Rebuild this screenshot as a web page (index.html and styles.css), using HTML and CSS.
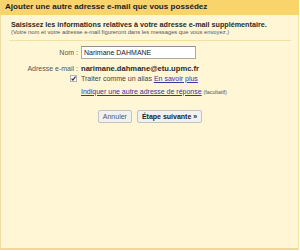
FILE: index.html
```html
<!DOCTYPE html>
<html>
<head>
  <title>Ajouter une adresse</title>
  <link rel="stylesheet" href="styles.css">
</head>
<body>
  <div class="dialog">
    <div class="title">Ajouter une autre adresse e-mail que vous possédez</div>
    <div class="content">
      <div class="intro">
        <div class="lead">Saisissez les informations relatives à votre adresse e-mail supplémentaire.</div>
        <div class="hint">(Votre nom et votre adresse e-mail figureront dans les messages que vous envoyez.)</div>
      </div>

      <div class="form">
        <div class="row name-row">
          <label class="label" for="name">Nom :</label>
          <input class="field" type="text" id="name" value="Narimane DAHMANE">
        </div>
        <div class="row email-row">
          <span class="label">Adresse e-mail :</span>
          <span class="email">narimane.dahmane@etu.upmc.fr</span>
        </div>
        <div class="row">
          <span class="label">
            <svg class="check" width="7" height="7" viewBox="0 0 7 7">
              <rect x="0.5" y="0.5" width="6" height="6" fill="#fdfdfd" stroke="#b5b5b5"/>
              <path d="M1.6 3.6 L2.9 5 L5.5 1.6" fill="none" stroke="#333" stroke-width="1.2"/>
            </svg>
          </span>
          <span>Traiter comme un alias <a href="#">En savoir plus</a></span>
        </div>
        <div class="row reply-row">
          <span class="label"></span>
          <span><a href="#">Indiquer une autre adresse de réponse</a> <span class="optional">(facultatif)</span></span>
        </div>
      </div>

      <div class="actions">
        <button class="btn">Annuler</button>
        <button class="btn strong">Étape suivante »</button>
      </div>
    </div>
  </div>
</body>
</html>
```

FILE: styles.css
```css
body {
  margin: 0;
  font-family: "Liberation Sans", Arial, sans-serif;
  color: #222;
}
.dialog {
  width: 299px;
  height: 250px;
  display: flex;
  flex-direction: column;
}
.title {
  background-color: #f9d36c;
  font-size: 8.1px;
  font-weight: bold;
  padding: 0 5px;
  height: 15px;
  line-height: 14px;
  color: #1e1e1e;
}
.content {
  flex: 1;
  background-color: #fff6d6;
  border-left: 1px solid #f0dfa4;
  border-right: 1px solid #f3e4ae;
  border-bottom: 2px solid #ecd992;
  padding: 0 7px 0 8px;
}
.intro {
  padding: 5px 2px 4px;
  border-bottom: 1px solid #f3e1a0;
}
.lead {
  font-size: 7.2px;
  font-weight: bold;
  line-height: 9px;
  color: #2a2a2a;
}
.hint {
  font-size: 5.8px;
  line-height: 7px;
  color: #555;
}
.form {
  margin-top: 5px;
}
.row {
  display: flex;
  align-items: center;
  font-size: 7px;
  height: 10px;
  color: #444;
}
.name-row {
  height: 13px;
}
.email-row {
  margin-top: 4px;
}
.reply-row {
  margin-top: 3px;
}
.label {
  width: 69px;
  flex-shrink: 0;
  text-align: right;
  padding-right: 3px;
  color: #555;
}
.field {
  width: 115px;
  height: 13px;
  box-sizing: border-box;
  padding: 0 2px;
  border: 1px solid #a9a9a9;
  border-top-color: #8f8f8f;
  font-family: inherit;
  font-size: 7px;
  color: #222;
  margin: 0;
}
.email {
  font-weight: bold;
  font-size: 7.6px;
  color: #2a2a2a;
}
.check {
  display: inline-block;
  vertical-align: middle;
  margin-right: 1px;
}
a {
  color: #3535a5;
}
.optional {
  font-size: 5.3px;
  color: #555;
}
.actions {
  display: flex;
  justify-content: center;
  gap: 5px;
  margin-top: 14px;
}
.btn {
  font-family: inherit;
  font-size: 7px;
  height: 13px;
  padding: 0 4px;
  border: 1px solid #c2c2c2;
  border-radius: 2px;
  background-color: #f1f1f1;
  color: #555;
}
.strong {
  font-weight: bold;
  color: #222;
}
```
